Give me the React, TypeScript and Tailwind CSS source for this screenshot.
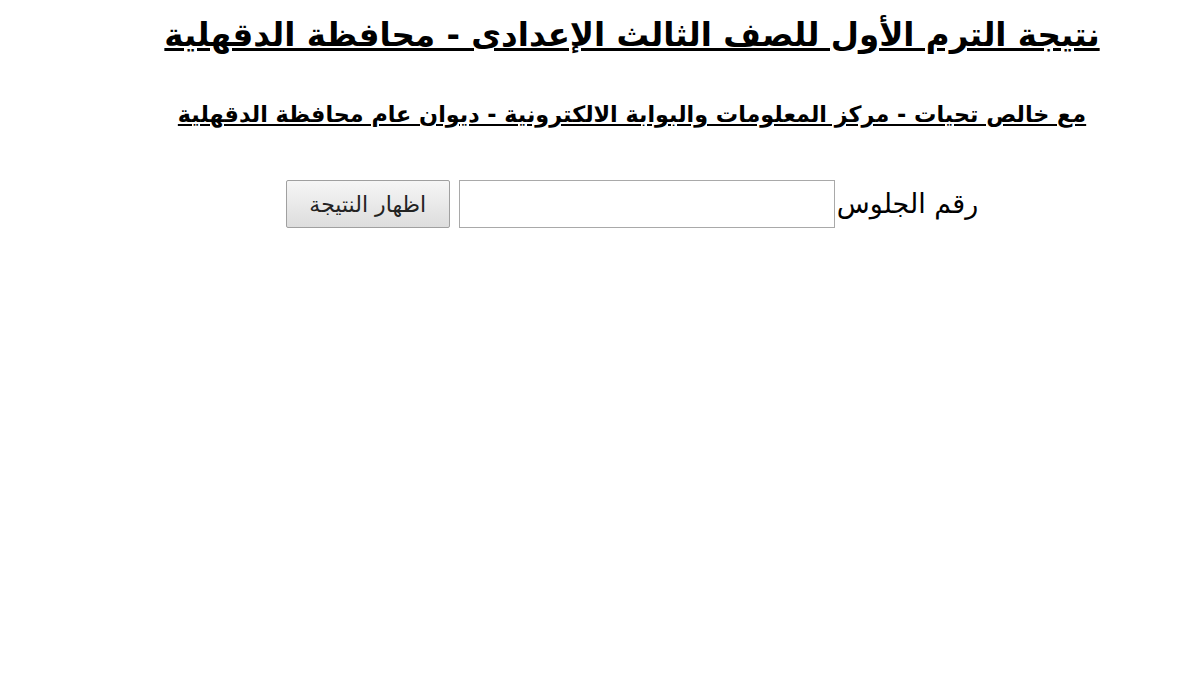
export default function App() {
  return (
    <div dir="rtl" className="w-[1200px] h-[681px] bg-white overflow-hidden pl-[64px]" style={{ fontFamily: '"DejaVu Sans", "Noto Sans", sans-serif' }}>
      <div className="flex flex-col items-center">
        <h1 className="mt-[7px] text-[32.5px] font-bold underline leading-[56px] text-black whitespace-nowrap">
          نتيجة الترم الأول للصف الثالث الإعدادى - محافظة الدقهلية
        </h1>
        <h2 className="mt-[35px] text-[22.3px] font-bold underline leading-[32px] text-black whitespace-nowrap">
          مع خالص تحيات - مركز المعلومات والبوابة الالكترونية - ديوان عام محافظة الدقهلية
        </h2>
        <div className="mt-[50px] flex items-center">
          <span className="text-[27px] text-black ml-[2px]">رقم الجلوس</span>
          <input className="w-[376px] h-[48px] border border-[#a9a9a9] bg-white outline-none" />
          <button className="mr-[9px] w-[164px] h-[48px] border border-[#a0a0a0] rounded-[2px] bg-gradient-to-b from-[#f6f6f6] to-[#dddddd] text-[22px] text-[#222]">
            اظهار النتيجة
          </button>
        </div>
      </div>
    </div>
  );
}
